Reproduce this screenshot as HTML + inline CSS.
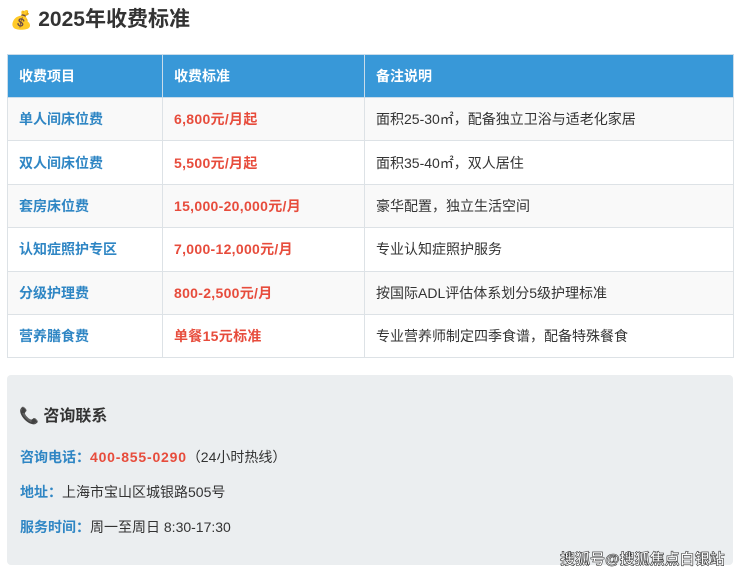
<!DOCTYPE html>
<html><head><meta charset="utf-8"><style>
body{margin:0;background:#fff;font-family:"Liberation Sans","Noto Sans CJK SC",sans-serif;width:740px;height:575px;overflow:hidden;position:relative}
h1{position:absolute;left:10px;top:5px;margin:0;font-size:21px;font-weight:bold;color:#333;line-height:30px}
table{position:absolute;left:7px;top:54px;border-collapse:collapse;width:727px;font-size:14px}
td,th{border:1px solid #dde2e6;padding:0 11px;height:42px;text-align:left}
td{height:42.4px}
th{background:#3898d8;color:#fff;font-weight:bold;border-color:#c9dcea}
tr td{background:#f9f9f9}
tr:nth-child(odd) td{background:#fff}
td.a{color:#2f86c4;font-weight:bold}
td.b{color:#e74c3c;font-weight:bold;letter-spacing:0.3px}
td.c{color:#333}
.box{position:absolute;left:7px;top:375px;width:726px;height:190px;background:#ebeef0;border-radius:4px}
.box p{position:absolute;left:13px;margin:0;font-size:14px;color:#333;line-height:20px}
.k{color:#2f86c4;font-weight:bold}
.wm{position:absolute;left:560px;top:548px;font-size:15px;font-weight:bold;color:#fff;-webkit-text-stroke:0.6px #333}
</style></head><body>
<h1><span style="font-size:18px">💰</span> 2025年收费标准</h1>
<table>
<tr><th style="width:132px">收费项目</th><th style="width:179px">收费标准</th><th>备注说明</th></tr>
<tr><td class="a">单人间床位费</td><td class="b">6,800元/月起</td><td class="c">面积25-30㎡，配备独立卫浴与适老化家居</td></tr>
<tr><td class="a">双人间床位费</td><td class="b">5,500元/月起</td><td class="c">面积35-40㎡，双人居住</td></tr>
<tr><td class="a">套房床位费</td><td class="b">15,000-20,000元/月</td><td class="c">豪华配置，独立生活空间</td></tr>
<tr><td class="a">认知症照护专区</td><td class="b">7,000-12,000元/月</td><td class="c">专业认知症照护服务</td></tr>
<tr><td class="a">分级护理费</td><td class="b">800-2,500元/月</td><td class="c">按国际ADL评估体系划分5级护理标准</td></tr>
<tr><td class="a">营养膳食费</td><td class="b">单餐15元标准</td><td class="c">专业营养师制定四季食谱，配备特殊餐食</td></tr>
</table>
<div class="box">
<p style="top:32px;font-size:16px;font-weight:bold;left:12px"><span style="color:#c0392b">📞</span> 咨询联系</p>
<p style="top:72px"><span class="k">咨询电话：</span><b style="color:#e74c3c;letter-spacing:0.8px">400-855-0290</b>（24小时热线）</p>
<p style="top:107px"><span class="k">地址：</span>上海市宝山区城银路505号</p>
<p style="top:142px"><span class="k">服务时间：</span>周一至周日 8:30-17:30</p>
</div>
<div class="wm">搜狐号@搜狐焦点白银站</div>
</body></html>
